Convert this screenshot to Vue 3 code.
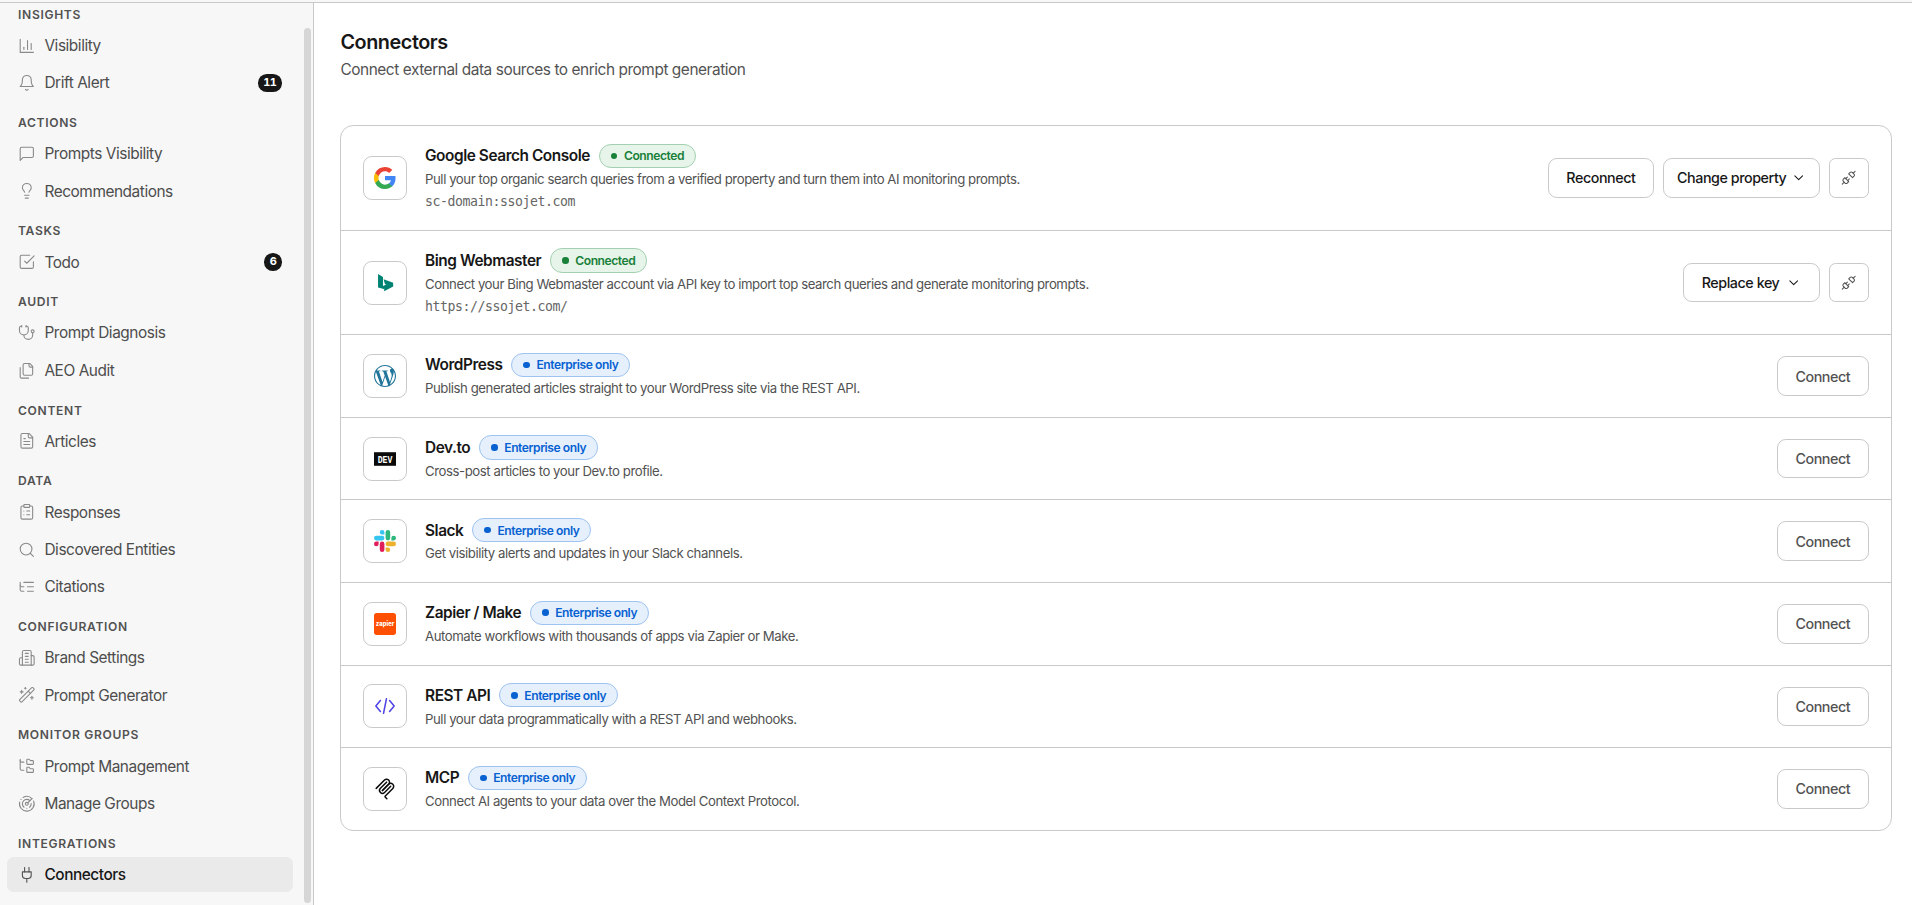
<script setup>
import { computed } from "vue";

const navGroups = [
	{
		title: "INSIGHTS",
		items: [
			{ label: "Visibility", icon: ["M3 3v18h18", "M18 17V9", "M13 17V5", "M8 17v-3"] },
			{
				label: "Drift Alert",
				icon: ["M6 8a6 6 0 0 1 12 0c0 7 3 9 3 9H3s3-2 3-9", "M10.3 21a1.94 1.94 0 0 0 3.4 0"],
				count: 11,
			},
		],
	},
	{
		title: "ACTIONS",
		items: [
			{ label: "Prompts Visibility", icon: ["M21 15a2 2 0 0 1-2 2H7l-4 4V5a2 2 0 0 1 2-2h14a2 2 0 0 1 2 2z"] },
			{
				label: "Recommendations",
				icon: [
					"M15 14c.2-1 .7-1.7 1.5-2.5 1-.9 1.5-2.2 1.5-3.5A6 6 0 0 0 6 8c0 1 .2 2.2 1.5 3.5.7.7 1.3 1.5 1.5 2.5",
					"M9 18h6",
					"M10 22h4",
				],
			},
		],
	},
	{
		title: "TASKS",
		items: [
			{
				label: "Todo",
				icon: ["m9 11 3 3L22 4", "M21 12v7a2 2 0 0 1-2 2H5a2 2 0 0 1-2-2V5a2 2 0 0 1 2-2h11"],
				count: 6,
			},
		],
	},
	{
		title: "AUDIT",
		items: [
			{
				label: "Prompt Diagnosis",
				icon: [
					"M11 2v2",
					"M5 2v2",
					"M5 3H4a2 2 0 0 0-2 2v4a6 6 0 0 0 12 0V5a2 2 0 0 0-2-2h-1",
					"M8 15a6 6 0 0 0 12 0v-3",
					"M18 10a2 2 0 1 0 4 0a2 2 0 1 0-4 0",
				],
			},
			{
				label: "AEO Audit",
				icon: [
					"M20 7h-3a2 2 0 0 1-2-2V2",
					"M9 18a2 2 0 0 1-2-2V4a2 2 0 0 1 2-2h7l4 4v10a2 2 0 0 1-2 2Z",
					"M3 7.6v12.8A1.6 1.6 0 0 0 4.6 22h9.8",
				],
			},
		],
	},
	{
		title: "CONTENT",
		items: [
			{
				label: "Articles",
				icon: [
					"M15 2H6a2 2 0 0 0-2 2v16a2 2 0 0 0 2 2h12a2 2 0 0 0 2-2V7Z",
					"M14 2v4a2 2 0 0 0 2 2h4",
					"M10 9H8",
					"M16 13H8",
					"M16 17H8",
				],
			},
		],
	},
	{
		title: "DATA",
		items: [
			{
				label: "Responses",
				icon: [
					"M9 2h6a1 1 0 0 1 1 1v2a1 1 0 0 1-1 1H9a1 1 0 0 1-1-1V3a1 1 0 0 1 1-1Z",
					"M16 4h2a2 2 0 0 1 2 2v14a2 2 0 0 1-2 2H6a2 2 0 0 1-2-2V6a2 2 0 0 1 2-2h2",
					"M12 11h4",
					"M12 16h4",
					"M8 11h.01",
					"M8 16h.01",
				],
			},
			{ label: "Discovered Entities", icon: ["M3 11a8 8 0 1 0 16 0a8 8 0 1 0-16 0", "m21 21-4.3-4.3"] },
			{
				label: "Citations",
				icon: ["M21 12h-8", "M21 6H8", "M21 18h-8", "M3 6v4c0 1.1.9 2 2 2h3", "M3 10v6c0 1.1.9 2 2 2h3"],
			},
		],
	},
	{
		title: "CONFIGURATION",
		items: [
			{
				label: "Brand Settings",
				icon: [
					"M6 22V4a2 2 0 0 1 2-2h8a2 2 0 0 1 2 2v18Z",
					"M6 12H4a2 2 0 0 0-2 2v6a2 2 0 0 0 2 2h2",
					"M18 9h2a2 2 0 0 1 2 2v9a2 2 0 0 1-2 2h-2",
					"M10 6h4",
					"M10 10h4",
					"M10 14h4",
					"M10 18h4",
				],
			},
			{
				label: "Prompt Generator",
				icon: [
					"m21.64 3.64-1.28-1.28a1.21 1.21 0 0 0-1.72 0L2.36 18.64a1.21 1.21 0 0 0 0 1.72l1.28 1.28a1.2 1.2 0 0 0 1.72 0L21.64 5.36a1.2 1.2 0 0 0 0-1.72",
					"m14 7 3 3",
					"M5 6v4",
					"M19 14v4",
					"M10 2v2",
					"M7 8H3",
					"M21 16h-4",
					"M11 3H9",
				],
			},
		],
	},
	{
		title: "MONITOR GROUPS",
		items: [
			{
				label: "Prompt Management",
				icon: [
					"M20 10a1 1 0 0 0 1-1V6a1 1 0 0 0-1-1h-2.5a1 1 0 0 1-.8-.4l-.9-1.2A1 1 0 0 0 15 3h-2a1 1 0 0 0-1 1v5a1 1 0 0 0 1 1Z",
					"M20 21a1 1 0 0 0 1-1v-3a1 1 0 0 0-1-1h-2.9a1 1 0 0 1-.88-.55l-.42-.85a1 1 0 0 0-.92-.6H13a1 1 0 0 0-1 1v5a1 1 0 0 0 1 1Z",
					"M3 5a2 2 0 0 0 2 2h3",
					"M3 3v13a2 2 0 0 0 2 2h3",
				],
			},
			{
				label: "Manage Groups",
				icon: [
					"M19.07 4.93A10 10 0 0 0 6.99 3.34",
					"M4 6h.01",
					"M2.29 9.62A10 10 0 1 0 21.31 8.35",
					"M16.24 7.76A6 6 0 1 0 8.23 16.67",
					"M12 18h.01",
					"M17.99 11.66A6 6 0 0 1 15.77 16.67",
					"M10 12a2 2 0 1 0 4 0a2 2 0 1 0-4 0",
					"m13.41 10.59 5.66-5.66",
				],
			},
		],
	},
	{
		title: "INTEGRATIONS",
		items: [
			{
				label: "Connectors",
				icon: ["M12 22v-5", "M9 8V2", "M15 8V2", "M18 8v5a4 4 0 0 1-4 4h-4a4 4 0 0 1-4-4V8Z"],
				active: true,
			},
		],
	},
];

const connectors = [
	{
		id: "google",
		name: "Google Search Console",
		description: "Pull your top organic search queries from a verified property and turn them into AI monitoring prompts.",
		source: "sc-domain:ssojet.com",
		buttons: [{ label: "Reconnect" }, { label: "Change property", menu: true, tight: true }],
	},
	{
		id: "bing",
		name: "Bing Webmaster",
		description: "Connect your Bing Webmaster account via API key to import top search queries and generate monitoring prompts.",
		source: "https://ssojet.com/",
		buttons: [{ label: "Replace key", menu: true }],
	},
	{
		id: "wordpress",
		name: "WordPress",
		description: "Publish generated articles straight to your WordPress site via the REST API.",
	},
	{ id: "dev", name: "Dev.to", description: "Cross-post articles to your Dev.to profile." },
	{ id: "slack", name: "Slack", description: "Get visibility alerts and updates in your Slack channels." },
	{ id: "zapier", name: "Zapier / Make", description: "Automate workflows with thousands of apps via Zapier or Make." },
	{ id: "rest", name: "REST API", description: "Pull your data programmatically with a REST API and webhooks." },
	{ id: "mcp", name: "MCP", description: "Connect AI agents to your data over the Model Context Protocol." },
];

// a connector with a source is linked, the others need the enterprise plan
const rows = computed(() =>
	connectors.map(c => ({
		...c,
		connected: !!c.source,
		buttons: c.buttons ?? [{ label: "Connect", muted: true }],
	}))
);
</script>

<template>
	<div class="page">
		<div class="topbar"></div>
		<div class="layout">
			<aside class="sidebar">
				<nav class="nav">
					<section v-for="group in navGroups" :key="group.title" class="nav-group">
						<h2 class="nav-title">{{ group.title }}</h2>
						<a v-for="item in group.items" :key="item.label" class="nav-item" :class="{ active: item.active }">
							<svg class="nav-icon" viewBox="0 0 24 24">
								<path v-for="d in item.icon" :key="d" :d="d" />
							</svg>
							<span class="nav-label">{{ item.label }}</span>
							<span v-if="item.count" class="count">{{ item.count }}</span>
						</a>
					</section>
				</nav>
				<div class="scroll-thumb"></div>
			</aside>

			<main class="main">
				<h1 class="title">Connectors</h1>
				<p class="subtitle">Connect external data sources to enrich prompt generation</p>

				<div class="card">
					<div v-for="row in rows" :key="row.id" class="row">
						<div class="tile">
							<svg v-if="row.id === 'google'" class="logo" viewBox="0 0 24 24">
								<path fill="#4285f4" d="M23.5 12.27c0-.85-.08-1.66-.22-2.45H12v4.63h6.45a5.52 5.52 0 0 1-2.39 3.62v3h3.87c2.26-2.09 3.57-5.16 3.57-8.8Z" />
								<path fill="#34a853" d="M12 24c3.24 0 5.96-1.08 7.94-2.91l-3.87-3c-1.08.72-2.45 1.15-4.07 1.15-3.13 0-5.78-2.11-6.73-4.96h-4v3.1A12 12 0 0 0 12 24Z" />
								<path fill="#fbbc05" d="M5.27 14.28a7.2 7.2 0 0 1 0-4.58V6.6h-4a12 12 0 0 0 0 10.78l4-3.1Z" />
								<path fill="#ea4335" d="M12 4.75c1.77 0 3.35.61 4.6 1.8l3.42-3.42C17.95 1.19 15.24 0 12 0A12 12 0 0 0 1.27 6.61l4 3.1C6.22 6.86 8.87 4.75 12 4.75Z" />
							</svg>
							<svg v-else-if="row.id === 'bing'" class="logo" viewBox="0 0 24 24">
								<path fill="#008373" d="M4.4 2.2l5.4 3.2v13L4.4 17Z" />
								<path fill="#008373" d="M10.4 7.8l10.5 3.8v4.2l-9.8 5.2v-4.4l3.6-2.2-2.8-1.4Z" />
								<path fill="#008373" d="M9.8 15.2l4.9-2v3.2l-4.9 2.4Z" />
							</svg>
							<svg v-else-if="row.id === 'wordpress'" class="logo" viewBox="0 0 24 24">
								<path fill="#21759b" d="M21.469 6.825c.84 1.537 1.318 3.3 1.318 5.175 0 3.979-2.156 7.456-5.363 9.325l3.295-9.527c.615-1.54.82-2.771.82-3.864 0-.405-.026-.78-.07-1.11m-7.981.105c.647-.03 1.232-.105 1.232-.105.582-.075.514-.93-.067-.899 0 0-1.755.135-2.88.135-1.064 0-2.85-.15-2.85-.15-.585-.03-.661.855-.075.885 0 0 .54.061 1.125.09l1.68 4.605-2.37 7.08L5.354 6.9c.649-.03 1.234-.1 1.234-.1.585-.075.516-.93-.065-.896 0 0-1.746.138-2.874.138-.2 0-.438-.008-.69-.015C4.911 3.15 8.235 1.215 12 1.215c2.809 0 5.365 1.072 7.286 2.833-.046-.003-.091-.009-.141-.009-1.06 0-1.812.923-1.812 1.914 0 .89.513 1.643 1.06 2.531.411.72.89 1.643.89 2.977 0 .915-.354 1.994-.821 3.479l-1.075 3.585-3.9-11.61.001.014zM12 22.784c-1.059 0-2.081-.153-3.048-.437l3.237-9.406 3.315 9.087c.024.053.05.101.078.149-1.12.393-2.325.607-3.582.607M1.211 12c0-1.564.336-3.05.935-4.39L7.29 21.709C3.694 19.96 1.212 16.271 1.211 12M12 0C5.385 0 0 5.385 0 12s5.385 12 12 12 12-5.385 12-12S18.615 0 12 0" />
							</svg>
							<svg v-else-if="row.id === 'dev'" class="logo" viewBox="0 0 24 24">
								<rect y="4.6" width="24" height="14.8" fill="#0a0a0a" />
								<text class="dev-text" x="12" y="16" text-anchor="middle" textLength="16" lengthAdjust="spacingAndGlyphs">DEV</text>
							</svg>
							<svg v-else-if="row.id === 'slack'" class="logo" viewBox="0 0 24 24">
								<path fill="#e01e5a" d="M5.042 15.165a2.528 2.528 0 0 1-2.52 2.523A2.528 2.528 0 0 1 0 15.165a2.527 2.527 0 0 1 2.522-2.52h2.52v2.52zm1.271 0a2.527 2.527 0 0 1 2.521-2.52 2.527 2.527 0 0 1 2.521 2.52v6.313A2.528 2.528 0 0 1 8.834 24a2.528 2.528 0 0 1-2.521-2.522v-6.313z" />
								<path fill="#36c5f0" d="M8.834 5.042a2.528 2.528 0 0 1-2.521-2.52A2.528 2.528 0 0 1 8.834 0a2.528 2.528 0 0 1 2.521 2.522v2.52H8.834zm0 1.271a2.528 2.528 0 0 1 2.521 2.521 2.528 2.528 0 0 1-2.521 2.521H2.522A2.528 2.528 0 0 1 0 8.834a2.528 2.528 0 0 1 2.522-2.521h6.312z" />
								<path fill="#2eb67d" d="M18.956 8.834a2.528 2.528 0 0 1 2.522-2.521A2.528 2.528 0 0 1 24 8.834a2.528 2.528 0 0 1-2.522 2.521h-2.522V8.834zm-1.268 0a2.528 2.528 0 0 1-2.523 2.521 2.527 2.527 0 0 1-2.52-2.521V2.522A2.527 2.527 0 0 1 15.165 0a2.528 2.528 0 0 1 2.523 2.522v6.312z" />
								<path fill="#ecb22e" d="M15.165 18.956a2.528 2.528 0 0 1 2.523 2.522A2.528 2.528 0 0 1 15.165 24a2.527 2.527 0 0 1-2.52-2.522v-2.522h2.52zm0-1.268a2.527 2.527 0 0 1-2.52-2.523 2.526 2.526 0 0 1 2.52-2.52h6.313A2.527 2.527 0 0 1 24 15.165a2.528 2.528 0 0 1-2.522 2.523h-6.313z" />
							</svg>
							<svg v-else-if="row.id === 'zapier'" class="logo" viewBox="0 0 24 24">
								<rect width="24" height="24" rx="3" fill="#ff4f00" />
								<text class="zapier-text" x="12" y="13.9" text-anchor="middle" textLength="20" lengthAdjust="spacingAndGlyphs">zapier</text>
							</svg>
							<svg v-else-if="row.id === 'rest'" class="logo line" viewBox="0 0 24 24">
								<path d="M17 6l5 6-5 6M7 6l-5 6 5 6M13.6 4l-3.2 16" stroke="#4f46e5" stroke-width="1.7" />
							</svg>
							<svg v-else class="logo line" viewBox="0 0 180 180">
								<g stroke="#0a0a0a" stroke-width="12">
									<path d="M18 84.8528L85.8822 16.9706C95.2548 7.59798 110.451 7.59798 119.823 16.9706C129.196 26.3431 129.196 41.5391 119.823 50.9117L68.5581 102.177" />
									<path d="M69.2652 101.47L119.823 50.9117C129.196 41.5391 144.392 41.5391 153.765 50.9117L154.118 51.2652C163.491 60.6378 163.491 75.8338 154.118 85.2063L92.7248 146.6C89.6006 149.724 89.6006 154.789 92.7248 157.913L105.331 170.52" />
									<path d="M102.853 33.9411L52.6482 84.1457C43.2756 93.5183 43.2756 108.714 52.6482 118.087C62.0208 127.459 77.2167 127.459 86.5893 118.087L136.794 67.8822" />
								</g>
							</svg>
						</div>

						<div class="info">
							<div class="heading">
								<span class="name">{{ row.name }}</span>
								<span class="badge" :class="{ connected: row.connected }">
									<span class="dot"></span>
									{{ row.connected ? "Connected" : "Enterprise only" }}
								</span>
							</div>
							<p class="description">{{ row.description }}</p>
							<p v-if="row.source" class="source">{{ row.source }}</p>
						</div>

						<div class="actions">
							<button v-for="btn in row.buttons" :key="btn.label" class="btn" :class="{ muted: btn.muted, tight: btn.tight }">
								{{ btn.label }}
								<svg v-if="btn.menu" class="chevron" viewBox="0 0 24 24"><path d="m6 9 6 6 6-6" /></svg>
							</button>
							<button v-if="row.connected" class="btn icon-btn">
								<svg class="unplug" viewBox="0 0 24 24">
									<path d="m19 5 3-3" />
									<path d="m2 22 3-3" />
									<path d="M6.3 20.3a2.4 2.4 0 0 0 3.4 0L12 18l-6-6-2.3 2.3a2.4 2.4 0 0 0 0 3.4Z" />
									<path d="m7.5 13.5 2.5-2.5" />
									<path d="m10.5 16.5 2.5-2.5" />
									<path d="m12 6 6 6 2.3-2.3a2.4 2.4 0 0 0 0-3.4l-2.6-2.6a2.4 2.4 0 0 0-3.4 0Z" />
								</svg>
							</button>
						</div>
					</div>
				</div>
			</main>
		</div>
	</div>
</template>

<style>
body {
	background: #ffffff;
	overflow: hidden;
}
</style>

<style scoped>
.page {
	zoom: 1.1;
	display: flex;
	flex-direction: column;
	height: calc(905px / 1.1);
	overflow: hidden;
	font-family: Inter, "Liberation Sans", sans-serif;
	font-size: 14px;
	letter-spacing: -0.4px;
	color: #171717;
}

.page * {
	box-sizing: border-box;
}

.topbar {
	flex: none;
	height: 2.8px;
	background: #f7f7f7;
	border-bottom: 1px solid #c9c9c9;
}

.layout {
	display: flex;
	flex: 1;
	min-height: 0;
}

.sidebar {
	position: relative;
	flex: none;
	width: 285.5px;
	padding: 2px 0 0 6.4px;
	background: #f7f7f7;
	border-right: 1px solid #c9c9c9;
}

.nav {
	width: 260px;
}

.nav-group + .nav-group {
	margin-top: 12px;
}

.nav-title {
	margin: 0;
	padding: 0.4px 10px 3.6px;
	font-size: 11px;
	line-height: 16.5px;
	font-weight: 600;
	letter-spacing: 0.055em;
	color: #525252;
}

.nav-item {
	display: flex;
	align-items: center;
	gap: 8px;
	height: 32px;
	padding: 0 10px;
	border-radius: 6px;
	font-size: 14px;
	color: #4d4d4d;
}

.nav-item + .nav-item {
	margin-top: 2px;
}

.nav-item.active {
	background: #eaeaea;
	color: #171717;
	font-weight: 500;
}

.nav-icon {
	width: 16px;
	height: 16px;
	fill: none;
	stroke: #8a8a8a;
	stroke-width: 1.5;
	stroke-linecap: round;
	stroke-linejoin: round;
}

.active .nav-icon {
	stroke: #525252;
}

.nav-label {
	flex: 1;
}

.count {
	min-width: 16px;
	height: 16px;
	padding: 0 5px;
	border-radius: 8px;
	background: #171717;
	color: #ffffff;
	font-size: 10px;
	line-height: 16px;
	font-weight: 700;
	font-variant-numeric: tabular-nums;
	text-align: center;
}

.scroll-thumb {
	position: absolute;
	top: 22.6px;
	right: 2px;
	bottom: 1.6px;
	width: 6.6px;
	border-radius: 4px;
	background: #d6d6d6;
}

.main {
	flex: 1;
	padding: 23px 18.4px 0 24px;
}

.title {
	margin: 0;
	font-size: 18px;
	line-height: 27px;
	font-weight: 600;
}

.subtitle {
	margin: 0 0 39px;
	font-size: 14px;
	line-height: 22px;
	color: #525252;
}

.card {
	border: 1px solid #c9c9c9;
	border-radius: 12px;
}

.row {
	display: flex;
	align-items: center;
	gap: 16px;
	padding: 16px 20px;
}

.row + .row {
	border-top: 1px solid #c9c9c9;
}

.tile {
	display: flex;
	align-items: center;
	justify-content: center;
	flex: none;
	width: 40px;
	height: 40px;
	border: 1px solid #c9c9c9;
	border-radius: 8px;
}

.logo {
	width: 20px;
	height: 20px;
}

.line {
	fill: none;
	stroke-linecap: round;
	stroke-linejoin: round;
}

.dev-text {
	font-family: "Liberation Mono", monospace;
	font-size: 12px;
	font-weight: 700;
	letter-spacing: 0;
	fill: #ffffff;
}

.zapier-text {
	font-family: Inter, sans-serif;
	font-size: 6.5px;
	font-weight: 800;
	letter-spacing: 0;
	fill: #ffffff;
}

.info {
	flex: 1;
}

.heading {
	display: flex;
	align-items: center;
	gap: 8px;
	height: 22px;
}

.name {
	font-size: 14px;
	font-weight: 600;
}

.badge {
	display: inline-flex;
	align-items: center;
	gap: 6px;
	height: 22px;
	padding: 0 10px;
	border: 1px solid #9dc3f0;
	border-radius: 11px;
	background: #e6f0fd;
	color: #0761d1;
	font-size: 11px;
	font-weight: 600;
}

.badge.connected {
	border-color: #a3d0b0;
	background: #e6f4ea;
	color: #188038;
}

.dot {
	width: 6px;
	height: 6px;
	border-radius: 50%;
	background: currentColor;
}

.description,
.source {
	margin: 2px 0 0;
	font-size: 12px;
	line-height: 18px;
	color: #525252;
}

.description {
	padding-bottom: 0.2px;
}

.source {
	font-family: "DejaVu Sans Mono", monospace;
	color: #666666;
}

.actions {
	display: flex;
	gap: 8px;
}

.btn {
	display: flex;
	align-items: center;
	justify-content: center;
	height: 36px;
	padding: 0 16px;
	border: 1px solid #c9c9c9;
	border-radius: 8px;
	background: #ffffff;
	color: #171717;
	font-family: inherit;
	font-size: 13px;
	font-weight: 500;
	letter-spacing: inherit;
	white-space: nowrap;
}

.btn.muted {
	color: #525252;
}

.btn.tight {
	padding: 0 12px;
}

.icon-btn {
	width: 36px;
	padding: 0;
	border-radius: 6px;
}

.chevron,
.unplug {
	width: 14px;
	height: 14px;
	fill: none;
	stroke: currentColor;
	stroke-width: 1.6;
	stroke-linecap: round;
	stroke-linejoin: round;
}

.chevron {
	margin-left: 6.4px;
}

.tight .chevron {
	margin-left: 4px;
}

.unplug {
	stroke: #525252;
}
</style>
